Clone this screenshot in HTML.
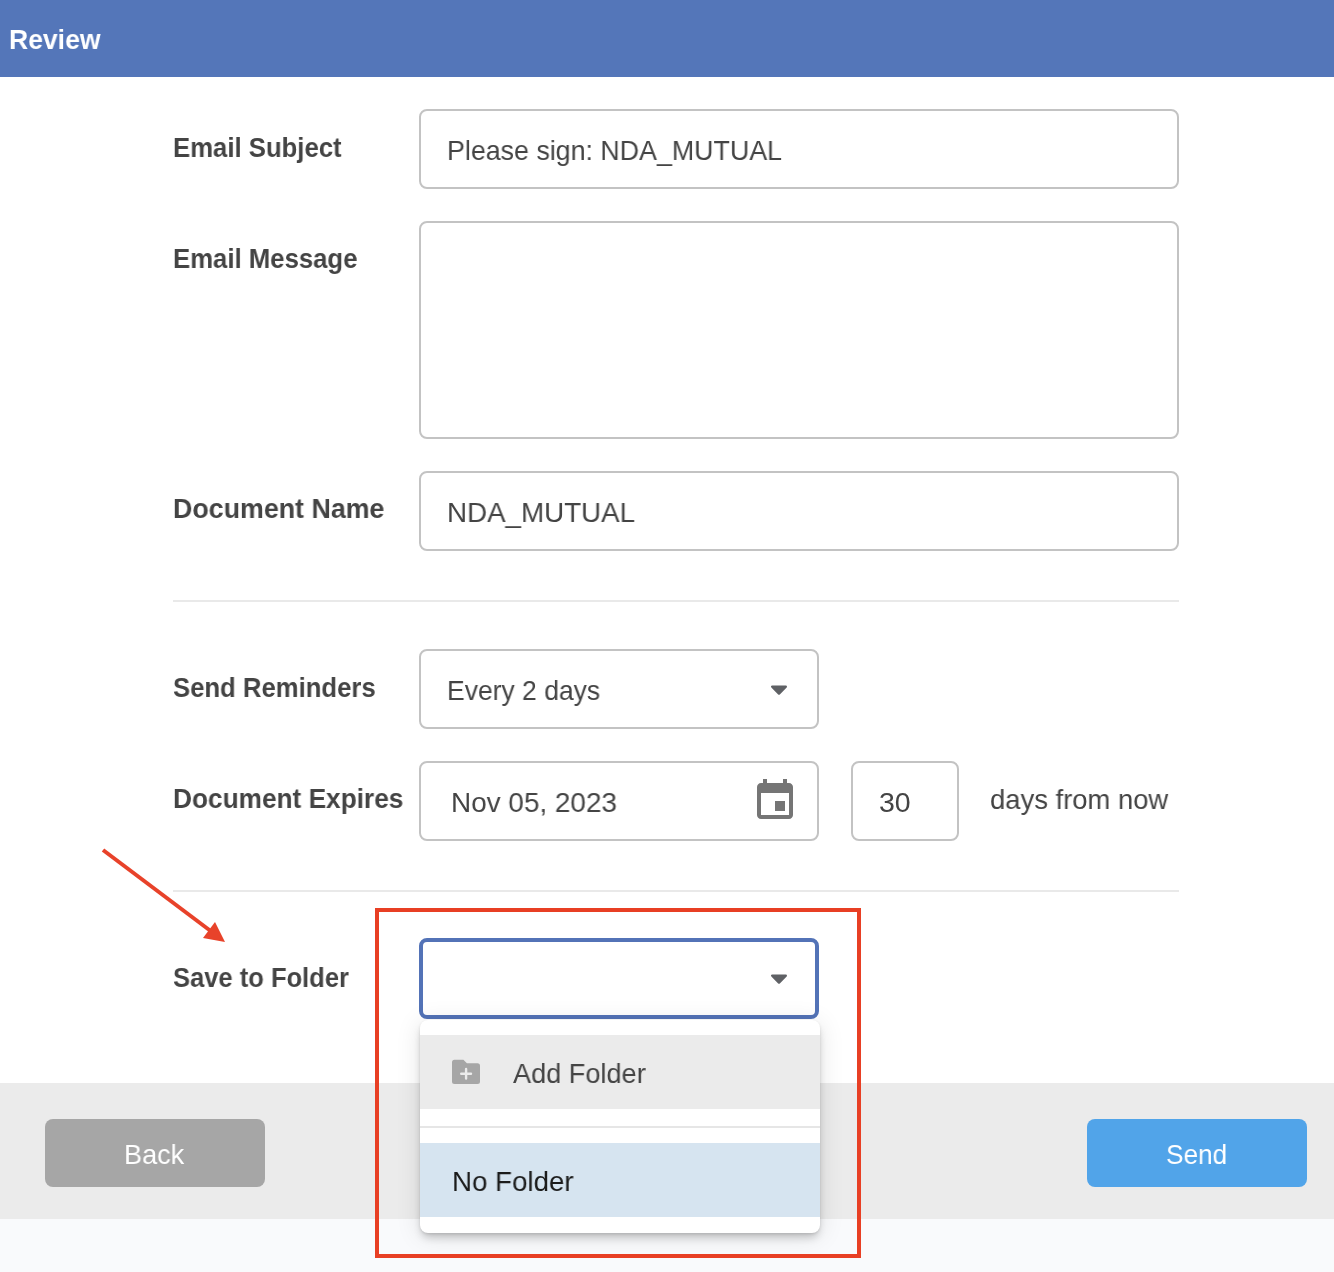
<!DOCTYPE html>
<html>
<head>
<meta charset="utf-8">
<style>
html,body{margin:0;padding:0;}
body{width:1334px;height:1272px;position:relative;overflow:hidden;background:#fff;font-family:"Liberation Sans",sans-serif;color:#444;}
.abs{position:absolute;}
.t{position:absolute;will-change:transform;transform-origin:0 0;font-size:28px;line-height:40px;white-space:nowrap;}
.box{position:absolute;box-sizing:border-box;border:2px solid #c3c3c3;border-radius:8px;background:#fff;}
.hr{position:absolute;left:173px;width:1006px;height:2px;background:#e9e9e9;}
.caret{position:absolute;width:18px;height:12px;}
</style>
</head>
<body>
<div class="abs" style="left:0;top:0;width:1334px;height:77px;background:#5476b9"></div>
<div class="t" style="left:8.7px;top:20.0px;font-weight:bold;color:#fff;transform:scaleX(0.9484)">Review</div>

<div class="t" style="left:172.66px;top:127.8px;font-weight:bold;color:#444;transform:scaleX(0.9182)">Email Subject</div>
<div class="box" style="left:419px;top:109px;width:760px;height:80px"></div>
<div class="t" style="left:447.09px;top:130.9px;font-weight:normal;color:#444;transform:scaleX(0.9568)">Please sign: NDA_MUTUAL</div>

<div class="t" style="left:172.76px;top:239.4px;font-weight:bold;color:#444;transform:scaleX(0.9187)">Email Message</div>
<div class="box" style="left:419px;top:221px;width:760px;height:218px"></div>

<div class="t" style="left:172.69px;top:489.4px;font-weight:bold;color:#444;transform:scaleX(0.9569)">Document Name</div>
<div class="box" style="left:419px;top:471px;width:760px;height:80px"></div>
<div class="t" style="left:446.72px;top:492.75px;font-weight:normal;color:#444;transform:scaleX(0.9909)">NDA_MUTUAL</div>

<div class="hr" style="top:600px"></div>

<div class="t" style="left:172.68px;top:668.0px;font-weight:bold;color:#444;transform:scaleX(0.9169)">Send Reminders</div>
<div class="box" style="left:419px;top:649px;width:400px;height:80px"></div>
<div class="t" style="left:446.91px;top:671.0px;font-weight:normal;color:#444;transform:scaleX(0.9465)">Every 2 days</div>
<svg class="caret" style="left:770px;top:684px" width="18" height="12" viewBox="0 0 18 12"><path d="M2.2 2.7 H15.8 L9 9.6Z" fill="#5f6165" stroke="#5f6165" stroke-width="2.4" stroke-linejoin="round"/></svg>

<div class="t" style="left:172.73px;top:779.4px;font-weight:bold;color:#444;transform:scaleX(0.937)">Document Expires</div>
<div class="box" style="left:419px;top:761px;width:400px;height:80px"></div>
<div class="t" style="left:450.81px;top:782.5px;font-weight:normal;color:#444;transform:scaleX(0.9963)">Nov 05, 2023</div>
<svg class="abs" style="left:751px;top:777px" width="48" height="48" viewBox="0 0 24 24"><path fill="#757575" d="M17 12h-5v5h5v-5zM16 1v2H8V1H6v2H5c-1.11 0-1.99.9-1.99 2L3 19c0 1.1.89 2 2 2h14c1.1 0 2-.9 2-2V5c0-1.1-.9-2-2-2h-1V1h-2zm3 18H5V8h14v11z"/></svg>
<div class="box" style="left:851px;top:761px;width:108px;height:80px"></div>
<div class="t" style="left:879.48px;top:782.5px;font-weight:normal;color:#444;transform:scaleX(1.0172)">30</div>
<div class="t" style="left:990.42px;top:779.8px;font-weight:normal;color:#444;transform:scaleX(0.979)">days from now</div>

<div class="hr" style="top:890px"></div>

<div class="t" style="left:172.69px;top:958.0px;font-weight:bold;color:#444;transform:scaleX(0.912)">Save to Folder</div>

<div class="abs" style="left:0;top:1083px;width:1334px;height:136px;background:#ebebeb"></div>
<div class="abs" style="left:0;top:1219px;width:1334px;height:53px;background:#f9fafc"></div>
<div class="abs" style="left:45px;top:1119px;width:220px;height:68px;border-radius:8px;background:#a6a6a6"></div>
<div class="abs" style="left:1087px;top:1119px;width:220px;height:68px;border-radius:8px;background:#51a4e9"></div>
<div class="t" style="left:124.07px;top:1135.0px;font-weight:normal;color:#fff;transform:scaleX(0.9667)">Back</div>
<div class="t" style="left:1166.13px;top:1135.0px;font-weight:normal;color:#fff;transform:scaleX(0.9355)">Send</div>

<div class="box" style="left:419px;top:938px;width:400px;height:81px;border:4px solid #5373b7"></div>
<svg class="caret" style="left:770px;top:973px" width="18" height="12" viewBox="0 0 18 12"><path d="M2.2 2.7 H15.8 L9 9.6Z" fill="#5f6165" stroke="#5f6165" stroke-width="2.4" stroke-linejoin="round"/></svg>

<div class="abs" style="left:420px;top:1020px;width:400px;height:213px;background:#fff;border-radius:8px;box-shadow:0 6px 8px -2px rgba(0,0,0,.2),0 3px 24px 1px rgba(0,0,0,.1),0 1px 3px rgba(0,0,0,.1);overflow:hidden">
  <div class="abs" style="left:0;top:15px;width:400px;height:74px;background:#ebebeb"></div>
  <div class="abs" style="left:0;top:106px;width:400px;height:2px;background:#e6e6e6"></div>
  <div class="abs" style="left:0;top:123px;width:400px;height:74px;background:#d6e4f0"></div>
</div>
<svg class="abs" style="left:452px;top:1059px" width="28" height="26" viewBox="0 0 28 26"><path fill="#a6a6a6" d="M2.5 0.8 H11.4 L14.9 4.3 H25.5 Q28 4.3 28 6.8 V22.4 Q28 24.9 25.5 24.9 H2.5 Q0 24.9 0 22.4 V3.3 Q0 0.8 2.5 0.8Z"/><path d="M14.1 10 V19.6 M9.2 14.8 H19" stroke="#ececec" stroke-width="2.4" stroke-linecap="round"/></svg>
<div class="t" style="left:512.8px;top:1054.0px;font-weight:normal;color:#444;transform:scaleX(0.9686)">Add Folder</div>
<div class="t" style="left:451.82px;top:1162.1px;font-weight:normal;color:#1b1b1b;transform:scaleX(0.9892)">No Folder</div>

<div class="abs" style="left:375px;top:908px;width:486px;height:350px;box-sizing:border-box;border:4px solid #e83f24"></div>
<svg class="abs" style="left:0;top:0" width="1334" height="1272" viewBox="0 0 1334 1272"><line x1="103" y1="850" x2="212" y2="932" stroke="#e8422a" stroke-width="4"/><path d="M225 942 L215 922 L203 938Z" fill="#e8432a"/></svg>
</body>
</html>
